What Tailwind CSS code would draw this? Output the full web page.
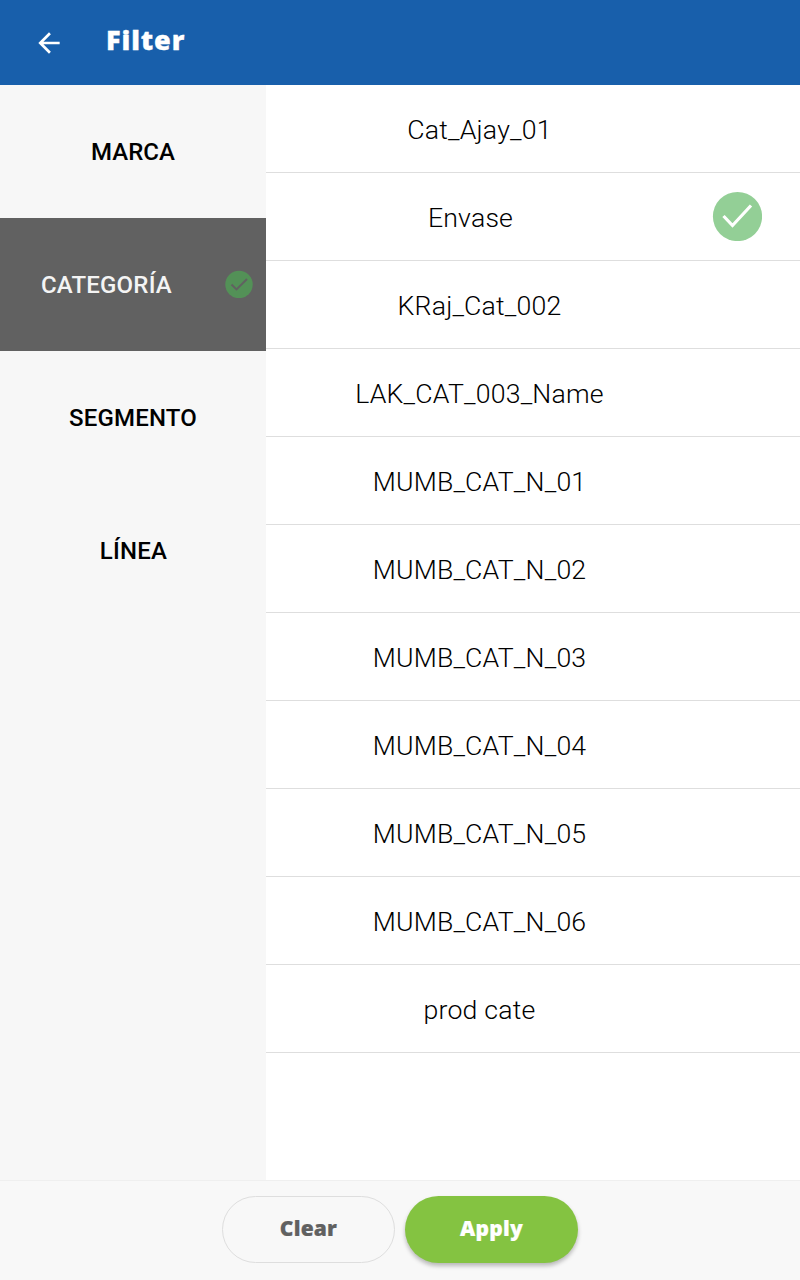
<!DOCTYPE html>
<html lang="es">
<head>
<meta charset="utf-8">
<title>Filter</title>
<script src="https://cdn.jsdelivr.net/npm/@tailwindcss/browser@4"></script>
</head>
<body class="w-[800px] h-[1280px] flex flex-col overflow-hidden bg-white font-['Roboto',sans-serif] text-black">
<header class="h-[85px] shrink-0 bg-[#185fab] flex text-white">
  <svg class="w-8 h-8 ml-[33px] mt-[27px]" viewBox="0 0 24 24" fill="currentColor"><path d="M20 11H7.83l5.59-5.59L12 4l-8 8 8 8 1.41-1.41L7.83 13H20v-2z"/></svg>
  <h1 class="ml-[41px] mt-[20px] text-[27px] leading-[40px] tracking-[0.9px] font-extrabold font-['Open_Sans',sans-serif] [-webkit-text-stroke:0.3px_white]">Filter</h1>
</header>
<main class="h-[1095px] shrink-0 flex">
  <nav class="w-[266px] shrink-0 bg-[#f7f7f7] text-[24px] leading-[28px] tracking-[0.2px] font-medium text-center">
    <div class="h-[133px] flex items-center justify-center"><span class="tracking-normal">MARCA</span></div>
    <div class="h-[133px] flex items-center bg-[#616161] text-[#f4f4f4]"><span class="w-[213px]">CATEGORÍA</span>
      <svg class="w-7 h-7 ml-3 mb-px" viewBox="0 0 28 28"><circle cx="14" cy="14.500" r="13.700" fill="#539157"/><path d="M6.500 14.500l5 5L22 9" fill="none" stroke="#616161" stroke-width="1.900"/></svg>
    </div>
    <div class="h-[133px] flex items-center justify-center"><span>SEGMENTO</span></div>
    <div class="h-[133px] flex items-center justify-center"><span class="pl-px">LÍNEA</span></div>
  </nav>
  <ul class="flex-1 text-[26.67px] leading-[32px] tracking-[0.18px] font-light text-center">
    <li class="h-[88px] pt-[29px] pr-[107px] border-b border-[#dedede]">Cat_Ajay_01</li>
    <li class="h-[88px] border-b border-[#dedede] flex"><span class="w-[409px] pt-[29px]">Envase</span>
      <svg class="w-[50px] h-[50px] ml-[37px] mt-[18px]" viewBox="0 0 50 50"><circle cx="25.500" cy="25.500" r="24.600" fill="#93cf96"/><path d="M11.500 25L20.500 34.500L39 14.500" fill="none" stroke="#fff" stroke-width="3.200"/></svg>
    </li>
    <li class="h-[88px] pt-[29px] pr-[107px] border-b border-[#dedede]">KRaj_Cat_002</li>
    <li class="h-[88px] pt-[29px] pr-[107px] border-b border-[#dedede]">LAK_CAT_003_Name</li>
    <li class="h-[88px] pt-[29px] pr-[107px] border-b border-[#dedede]">MUMB_CAT_N_01</li>
    <li class="h-[88px] pt-[29px] pr-[107px] border-b border-[#dedede]">MUMB_CAT_N_02</li>
    <li class="h-[88px] pt-[29px] pr-[107px] border-b border-[#dedede]">MUMB_CAT_N_03</li>
    <li class="h-[88px] pt-[29px] pr-[107px] border-b border-[#dedede]">MUMB_CAT_N_04</li>
    <li class="h-[88px] pt-[29px] pr-[107px] border-b border-[#dedede]">MUMB_CAT_N_05</li>
    <li class="h-[88px] pt-[29px] pr-[107px] border-b border-[#dedede]">MUMB_CAT_N_06</li>
    <li class="h-[88px] pt-[29px] pr-[107px] border-b border-[#dedede]">prod cate</li>
  </ul>
</main>
<footer class="h-[100px] shrink-0 bg-[#f8f8f8] border-t border-[#efefef] pt-[15px] flex justify-center gap-[10px] font-['Open_Sans',sans-serif] font-extrabold text-[21px] leading-[30px] tracking-[0.2px]">
  <button class="w-[173px] h-[67px] rounded-full border border-[#dedede] text-[#616161] pb-[4px] [-webkit-text-stroke:0.2px_#616161]">Clear</button>
  <button class="w-[173px] h-[67px] rounded-full bg-[#84c341] text-white pb-[4px] shadow-[0_3px_4px_rgba(0,0,0,0.26)] [-webkit-text-stroke:0.2px_white]">Apply</button>
</footer>
</body>
</html>
